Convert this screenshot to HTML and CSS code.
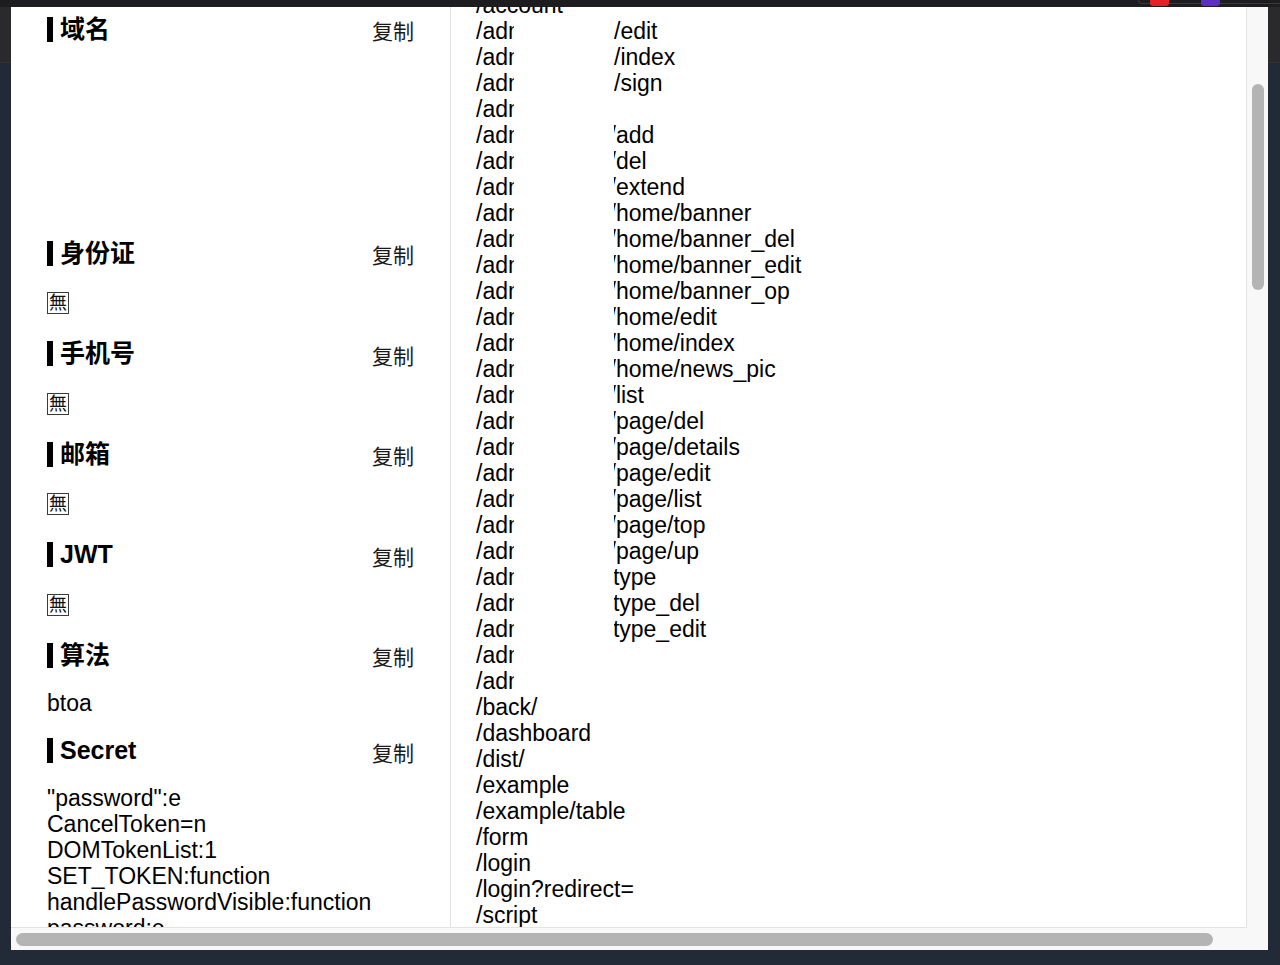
FILE: index.html
```html
<!DOCTYPE html>
<html lang="zh-CN">
<head>
<meta charset="utf-8">
<title>信息</title>
<link rel="stylesheet" href="styles.css">
</head>
<body>
<div class="topbar">
  <span class="spacer"></span>
  <span class="pill"></span>
  <span class="badge red"></span>
  <span class="badge purple"></span>
  <span class="endgap"></span>
</div>
<div class="stage">
  <div class="popup">
    <div class="main">
      <div class="content">
        <div class="col-left">
          <div class="section">
            <div class="sec-head"><span class="title">域名</span><span class="copy">复制</span></div>
            <div class="val empty"></div>
          </div>
          <div class="section">
            <div class="sec-head"><span class="title">身份证</span><span class="copy">复制</span></div>
            <div class="val boxline"><span class="wu">無</span></div>
          </div>
          <div class="section">
            <div class="sec-head"><span class="title">手机号</span><span class="copy">复制</span></div>
            <div class="val boxline"><span class="wu">無</span></div>
          </div>
          <div class="section">
            <div class="sec-head"><span class="title">邮箱</span><span class="copy">复制</span></div>
            <div class="val boxline"><span class="wu">無</span></div>
          </div>
          <div class="section">
            <div class="sec-head"><span class="title">JWT</span><span class="copy">复制</span></div>
            <div class="val boxline"><span class="wu">無</span></div>
          </div>
          <div class="section">
            <div class="sec-head"><span class="title">算法</span><span class="copy">复制</span></div>
            <div class="val">btoa</div>
          </div>
          <div class="section">
            <div class="sec-head"><span class="title">Secret</span><span class="copy">复制</span></div>
            <div class="val">"password":e</div>
            <div class="val">CancelToken=n</div>
            <div class="val">DOMTokenList:1</div>
            <div class="val">SET_TOKEN:function</div>
            <div class="val">handlePasswordVisible:function</div>
            <div class="val">password:e</div>
          </div>
        </div>
        <div class="col-right">
          <div class="row full">/account</div>
          <div class="row"><span class="a"><span class="clip">/admin</span></span><span class="b">/edit</span></div>
          <div class="row"><span class="a"><span class="clip">/admin</span></span><span class="b">/index</span></div>
          <div class="row"><span class="a"><span class="clip">/admin</span></span><span class="b">/sign</span></div>
          <div class="row"><span class="a"><span class="clip">/admin</span></span><span class="b"></span></div>
          <div class="row"><span class="a"><span class="clip">/admin</span></span><span class="b"><span class="cut">/add</span></span></div>
          <div class="row"><span class="a"><span class="clip">/admin</span></span><span class="b"><span class="cut">/del</span></span></div>
          <div class="row"><span class="a"><span class="clip">/admin</span></span><span class="b"><span class="cut">/extend</span></span></div>
          <div class="row"><span class="a"><span class="clip">/admin</span></span><span class="b"><span class="cut">/home/banner</span></span></div>
          <div class="row"><span class="a"><span class="clip">/admin</span></span><span class="b"><span class="cut">/home/banner_del</span></span></div>
          <div class="row"><span class="a"><span class="clip">/admin</span></span><span class="b"><span class="cut">/home/banner_edit</span></span></div>
          <div class="row"><span class="a"><span class="clip">/admin</span></span><span class="b"><span class="cut">/home/banner_op</span></span></div>
          <div class="row"><span class="a"><span class="clip">/admin</span></span><span class="b"><span class="cut">/home/edit</span></span></div>
          <div class="row"><span class="a"><span class="clip">/admin</span></span><span class="b"><span class="cut">/home/index</span></span></div>
          <div class="row"><span class="a"><span class="clip">/admin</span></span><span class="b"><span class="cut">/home/news_pic</span></span></div>
          <div class="row"><span class="a"><span class="clip">/admin</span></span><span class="b"><span class="cut">/list</span></span></div>
          <div class="row"><span class="a"><span class="clip">/admin</span></span><span class="b"><span class="cut">/page/del</span></span></div>
          <div class="row"><span class="a"><span class="clip">/admin</span></span><span class="b"><span class="cut">/page/details</span></span></div>
          <div class="row"><span class="a"><span class="clip">/admin</span></span><span class="b"><span class="cut">/page/edit</span></span></div>
          <div class="row"><span class="a"><span class="clip">/admin</span></span><span class="b"><span class="cut">/page/list</span></span></div>
          <div class="row"><span class="a"><span class="clip">/admin</span></span><span class="b"><span class="cut">/page/top</span></span></div>
          <div class="row"><span class="a"><span class="clip">/admin</span></span><span class="b"><span class="cut">/page/up</span></span></div>
          <div class="row"><span class="a"><span class="clip">/admin</span></span><span class="b"><span class="cut2">/type</span></span></div>
          <div class="row"><span class="a"><span class="clip">/admin</span></span><span class="b"><span class="cut2">/type_del</span></span></div>
          <div class="row"><span class="a"><span class="clip">/admin</span></span><span class="b"><span class="cut2">/type_edit</span></span></div>
          <div class="row"><span class="a"><span class="clip">/admin</span></span><span class="b"></span></div>
          <div class="row"><span class="a"><span class="clip">/admin</span></span><span class="b"></span></div>
          <div class="row full">/back/</div>
          <div class="row full">/dashboard</div>
          <div class="row full">/dist/</div>
          <div class="row full">/example</div>
          <div class="row full">/example/table</div>
          <div class="row full">/form</div>
          <div class="row full">/login</div>
          <div class="row full">/login?redirect=</div>
          <div class="row full">/script</div>
          <div class="row full">/user</div>
        </div>
      </div>
      <div class="vbar"><div class="vthumb"></div></div>
    </div>
    <div class="hbar"><div class="hthumb"></div></div>
  </div>
</div>
</body>
</html>
```

FILE: styles.css
```css
html, body {
  margin: 0;
  padding: 0;
}
body {
  width: 1280px;
  height: 965px;
  overflow: hidden;
  background: linear-gradient(to bottom, #1d1d1f 0, #1d1d1f 7px, #2a2a2c 7px, #2a2a2c 62px, #343438 62px, #343438 63px, #222a38 63px, #222a38 100%);
  font-family: "Liberation Sans", "Noto Sans CJK SC", sans-serif;
  color: #000;
}
.topbar {
  height: 7px;
  display: flex;
  align-items: flex-start;
}
.spacer { flex: 1; }
.pill {
  width: 150px;
  height: 3px;
  margin-right: -140px;
  border: 1px solid #3a3a3d;
  border-top: none;
  border-radius: 0 0 14px 14px;
}
.badge {
  height: 6px;
  width: 19px;
  border-radius: 0 0 3px 3px;
}
.red { background: #e3202b; margin-right: 32px; }
.purple { background: #5a2fc2; }
.endgap { width: 60px; }
.stage {
  display: flex;
  padding-left: 11px;
}
.popup {
  width: 1257px;
  height: 943px;
  background: #f8f8f8;
  display: flex;
  flex-direction: column;
}
.main {
  height: 921px;
  display: flex;
}
.content {
  width: 1236px;
  height: 921px;
  box-sizing: border-box;
  border-right: 1px solid #e3e3e3;
  border-bottom: 1px solid #e3e3e3;
  background: #fff;
  overflow: hidden;
  display: flex;
  align-items: flex-start;
  font-size: 23px;
  line-height: 26px;
}
.vbar {
  width: 21px;
  background: #f8f8f8;
}
.vthumb {
  margin: 77px 0 0 5px;
  width: 12px;
  height: 206px;
  border-radius: 6px;
  background: #b4b4b4;
}
.hbar {
  height: 22px;
  background: #f8f8f8;
}
.hthumb {
  margin: 5px 0 0 5px;
  width: 1197px;
  height: 13px;
  border-radius: 7px;
  background: #b4b4b4;
}
.col-left {
  width: 440px;
  flex: none;
  box-sizing: border-box;
  border-right: 1px solid #e1e1e1;
  padding: 7px 36px 0 36px;
  min-height: 960px;
}
.section {
  margin-bottom: 20px;
}
.sec-head {
  display: flex;
  justify-content: space-between;
  align-items: center;
  height: 30px;
  margin-bottom: 19.5px;
}
.title {
  font-size: 25px;
  font-weight: 700;
  line-height: 25px;
  border-left: 6px solid #000;
  padding-left: 7px;
}
.copy {
  font-size: 21px;
  line-height: 24px;
  color: #1a1a1a;
  margin-top: 6px;
}
.val {
  white-space: nowrap;
}
.val.empty {
  height: 154.5px;
}
.val.boxline {
  height: 31px;
  display: flex;
  align-items: center;
}
.wu {
  display: inline-block;
  width: 20px;
  height: 20px;
  border: 1px solid #3a3a3a;
  font-size: 18px;
  line-height: 20px;
  text-align: center;
  color: #111;
}
.col-right {
  flex: 1;
  padding-left: 25px;
  margin-top: -15px;
}
.row {
  display: grid;
  grid-template-columns: 138px 1fr;
  height: 26px;
  white-space: nowrap;
}
.row.full {
  display: block;
}
.a {
  display: block;
}
.clip {
  display: inline-block;
  width: 38px;
  overflow: hidden;
  vertical-align: top;
}
.b {
  display: block;
  overflow: hidden;
}
.cut {
  display: inline-block;
  margin-left: -4.5px;
}
.cut2 {
  display: inline-block;
  margin-left: -7.5px;
}
```
